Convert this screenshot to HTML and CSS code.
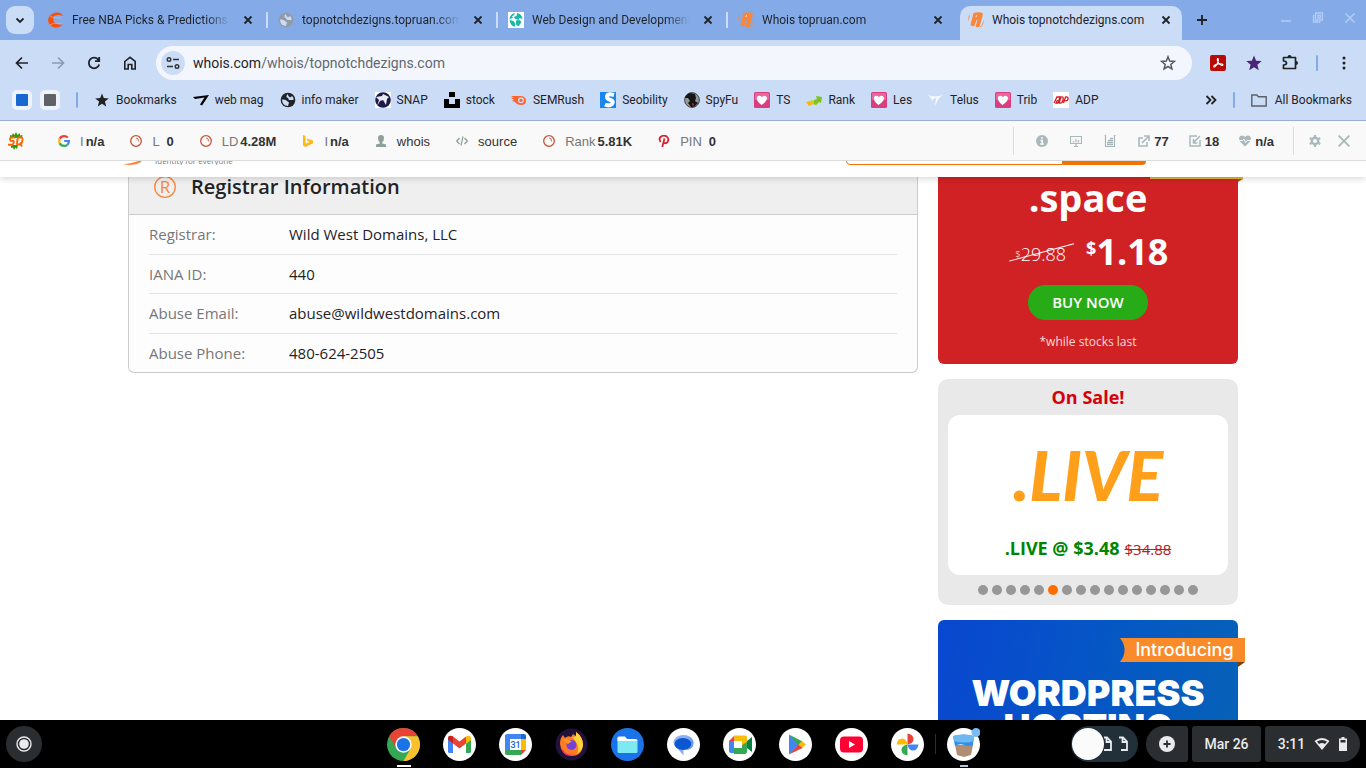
FILE: index.html
```html
<!DOCTYPE html>
<html lang="en">
<head>
	<meta charset="utf-8">
	<title>Whois topnotchdezigns.com</title>
	<link rel="stylesheet" href="styles.css">
</head>
<body>
	<!-- shared icons -->
	<svg class="defs" width="0" height="0">
		<symbol id="close" viewBox="0 0 16 16"><path d="M4.500 4.500l7 7M11.500 4.500l-7 7" fill="none" stroke="currentColor" stroke-width="1.800"/></symbol>
		<symbol id="whois" viewBox="0 0 16 16"><path d="M5.500 1Q10 -.5 14.500 1Q15.200 3 14 6L11.500 14.500Q9 16 7.500 14.500L9.500 8L8.500 8L6.500 13.500Q4.500 15 2.500 13Z" fill="#f8873a"/><path d="M8 5l.700-2" stroke="#fbe0ce"/><path d="M16 8Q15.500 14 11 15.800L13.800 13zM.6 4.500L.3 10 2.200 2.500z" fill="#f8873a"/></symbol>
		<symbol id="globe" viewBox="0 0 16 16"><circle cx="8" cy="8" r="7.300" fill="currentColor"/><path d="M2 7.500Q6 7 7 9L9 10.500L8 14Q2 13.500 2 7.500zM7.500 2Q5 5 8 6L9 8H13.500Q14 5.500 12 4L10 5.500 8.500 4z" fill="#cbdcf6"/></symbol>
		<symbol id="heart" viewBox="0 0 16 16"><rect width="16" height="16" rx="1.500" fill="#d93f80"/><rect x="1" y="1" width="14" height="7" rx="1" fill="#e9679b"/><path d="M7.500 13Q2 9 3 5Q5 2.500 8 5Q11 2.500 13 5.500Q13.500 9 7.500 13Z" fill="#fff"/></symbol>
		<symbol id="ring" viewBox="0 0 12 12"><circle cx="6" cy="6" r="5.300" fill="none" stroke="#c55337" stroke-width="1.300"/><path d="M6 3q3 0 2.500 3.500" fill="none" stroke="#c55337" stroke-width=".8"/></symbol>
	</svg>

	<header class="browser">
		<div class="tabstrip">
			<button class="tab-search" aria-label="Search tabs"><svg viewBox="0 0 16 16" width="16" height="16"><path d="M4.500 6.500L8 10l3.500-3.500" fill="none" stroke="#222" stroke-width="1.800"/></svg></button>
			<nav class="tabs">
				<div class="tab">
					<svg viewBox="0 0 16 16" width="16" height="16"><path d="M1 5Q4 0 10 .5Q14 1 15 4Q10 2 6 4Q4 8 7 11Q11 14 15 12Q11 17 5 15Q-2 11 1 5Z" fill="#f84f0c"/><path d="M2 4q4 3 12 1M2 13q4-3 12-1" fill="none" stroke="#ffad7e" stroke-width=".7"/></svg>
					<a href="#">Free NBA Picks &amp; Predictions</a>
					<button aria-label="Close tab"><svg width="16" height="16"><use href="#close"/></svg></button>
				</div>
				<div class="tab">
					<svg class="dim" width="16" height="16"><use href="#globe"/></svg>
					<a href="#">topnotchdezigns.topruan.com</a>
					<button aria-label="Close tab"><svg width="16" height="16"><use href="#close"/></svg></button>
				</div>
				<div class="tab">
					<svg viewBox="0 0 16 16" width="16" height="16"><path d="M0 0h16v16H0z" fill="#fff"/><path d="M1.500 7Q2 2 7 1L6 3L4 4.500L5 6zM9 1q5 1 5.500 6l-3-1-1 2-3-1-2-2 3-1zM1.500 8l4 1 2 3-1 3Q2 13 1.500 8zM8 8.500l3.500-.500 2 2-3 4.500-2.500-2z" fill="#19b8aa"/></svg>
					<a href="#">Web Design and Development</a>
					<button aria-label="Close tab"><svg width="16" height="16"><use href="#close"/></svg></button>
				</div>
				<div class="tab">
					<svg width="16" height="16"><use href="#whois"/></svg>
					<a href="#">Whois topruan.com</a>
					<button aria-label="Close tab"><svg width="16" height="16"><use href="#close"/></svg></button>
				</div>
				<div class="tab active">
					<svg width="16" height="16"><use href="#whois"/></svg>
					<a href="#">Whois topnotchdezigns.com</a>
					<button aria-label="Close tab"><svg width="16" height="16"><use href="#close"/></svg></button>
				</div>
			</nav>
			<button class="new-tab" aria-label="New tab"><svg viewBox="0 0 16 16" width="16" height="16"><path d="M8 3v10M3 8h10" stroke="#222" stroke-width="1.800"/></svg></button>
			<div class="window-buttons">
				<button aria-label="Minimize"><svg viewBox="0 0 16 16" width="16" height="16"><path d="M3 9h10" stroke="currentColor" stroke-width="1.500"/></svg></button>
				<button aria-label="Restore"><svg viewBox="0 0 16 16" width="16" height="16"><path d="M5.500 1h7v7h-7zM3.500 3v7h7M8 3.500h2.500V6H8z" fill="none" stroke="currentColor" stroke-width="1.300"/></svg></button>
				<button aria-label="Close window"><svg viewBox="0 0 16 16" width="16" height="16"><path d="M3.500 1.500l9 9M12.500 1.500l-9 9" stroke="currentColor" stroke-width="1.500"/></svg></button>
			</div>
		</div>

		<div class="toolbar">
			<div class="nav-buttons">
				<button aria-label="Back"><svg viewBox="0 0 16 16" width="16" height="16"><path d="M14 8H3M8 2.500L2.500 8L8 13.500" fill="none" stroke="currentColor" stroke-width="1.700"/></svg></button>
				<button aria-label="Forward" disabled><svg viewBox="0 0 16 16" width="16" height="16"><path d="M2 8h11M8 2.500L13.500 8L8 13.500" fill="none" stroke="currentColor" stroke-width="1.700"/></svg></button>
				<button aria-label="Reload"><svg viewBox="0 0 16 16" width="16" height="16"><path d="M12.500 5A5.300 5.300 0 1 0 13.200 9.500M13.200 2v4.200H9" fill="none" stroke="currentColor" stroke-width="1.800"/></svg></button>
				<button aria-label="Home"><svg viewBox="0 0 16 16" width="16" height="16"><path d="M2.800 6.500L8 2.300L13.200 6.500V14H9.800V9.500H6.200V14H2.800Z" fill="none" stroke="currentColor" stroke-width="1.600"/></svg></button>
			</div>
			<div class="omnibox">
				<button class="site-info" aria-label="Site information"><svg viewBox="0 0 16 16" width="16" height="16"><path d="M8 4.500h6M2 11.500h6" stroke="#333" stroke-width="1.600"/><circle cx="4" cy="4.500" r="1.800" fill="none" stroke="#333" stroke-width="1.400"/><circle cx="12" cy="11.500" r="1.800" fill="none" stroke="#333" stroke-width="1.400"/></svg></button>
				<a class="url" href="#">whois.com<span>/whois/topnotchdezigns.com</span></a>
				<button aria-label="Bookmark this tab"><svg viewBox="0 0 16 16" width="16" height="16"><path d="M8 1.800l1.700 4.300 4.600.3-3.500 3 1.100 4.500L8 11.500l-3.900 2.400 1.100-4.500-3.500-3 4.600-.3z" fill="none" stroke="#555b63" stroke-width="1.500"/></svg></button>
			</div>
			<div class="extensions">
				<button aria-label="Acrobat"><svg viewBox="0 0 16 16" width="16" height="16"><rect width="16" height="16" rx="2" fill="#b90b06"/><path d="M7.500 3.500Q9 3.500 8 7Q5.500 12.500 4 12Q2.800 11 6 9.500Q12 8 13 9.800Q12.500 11.500 9.500 9Q6.500 5.500 7.500 3.500Z" fill="none" stroke="#fff" stroke-width="1.100"/></svg></button>
				<button aria-label="Star extension"><svg viewBox="0 0 16 16" width="16" height="16"><path d="M8 .5l2.100 5.200 5.600.3-4.300 3.700 1.400 5.500L8 12.200l-4.800 3 1.400-5.500L.3 6l5.600-.3z" fill="#4c2474"/></svg></button>
				<button aria-label="Extensions"><svg viewBox="0 0 16 16" width="16" height="16"><path d="M1.500 2.500h12v11h-12v-3.500q3-.2 3-2t-3-2z" fill="none" stroke="#222" stroke-width="1.700" stroke-linejoin="round"/><path d="M5.500 2q0-2 2-2t2 2zM14 6q2 0 2 2t-2 2z" fill="#222"/></svg></button>
				<i class="divider"></i>
				<button aria-label="Menu"><svg viewBox="0 0 16 16" width="16" height="16"><g fill="#222"><circle cx="8" cy="3" r="1.500"/><circle cx="8" cy="8" r="1.500"/><circle cx="8" cy="13" r="1.500"/></g></svg></button>
			</div>
		</div>

		<nav class="bookmarks">
			<button class="swatch blue" aria-label="Blue tab group"></button>
			<button class="swatch gray" aria-label="Gray tab group"></button>
			<i class="divider"></i>
			<a href="#"><svg viewBox="0 0 16 16" width="16" height="16"><path d="M8 1.500l1.800 4.600 5 .3-3.900 3.200 1.300 4.900L8 11.800l-4.200 2.700 1.300-4.900L1.200 6.400l5-.3z" fill="#222"/></svg>Bookmarks</a>
			<a href="#"><svg viewBox="0 0 16 16" width="16" height="16"><path d="M0 5L16 3L9 13.500L7 12.500L11.500 5.500L2 7z"/></svg>web mag</a>
			<a href="#"><svg width="16" height="16"><use href="#globe"/></svg>info maker</a>
			<a href="#"><svg viewBox="0 0 16 16" width="16" height="16"><path d="M0 0h16v16H0z" fill="#fff"/><circle cx="8" cy="8" r="7.800" fill="#1b1b4b"/><path d="M1 5l6-1 1-2 6 3-2 2-1 6-3-5-3 1-3 5 2-6z" fill="#e8e8f2"/></svg>SNAP</a>
			<a href="#"><svg viewBox="0 0 16 16" width="16" height="16"><path d="M5 0h6v5H5zM0 7h5v5h6V7h5v9H0z"/></svg>stock</a>
			<a href="#"><svg viewBox="0 0 16 16" width="16" height="16"><path d="M0 4h9q6 0 6 5 0 4-5 4-4 0-6-3l-3-1 2-1-3-2h3z" fill="#ff642d"/><circle cx="10" cy="8.300" r="3" fill="#cbdcf6"/><circle cx="10" cy="8.300" r="1.600" fill="#ff642d"/></svg>SEMRush</a>
			<a href="#"><svg viewBox="0 0 16 16" width="16" height="16"><path d="M0 0h16v16H0z" fill="#1986ee"/><path d="M14 3Q7 1 7 5Q7 7 10.500 8Q14 9 12 12Q9 14.500 5 12.500" fill="none" stroke="#fff" stroke-width="4"/></svg>Seobility</a>
			<a href="#"><svg viewBox="0 0 16 16" width="16" height="16"><circle cx="8" cy="8" r="7.400" fill="#94979c" stroke="#444"/><path d="M1 6q1-4 5-5l5 1 1 4-1 3 3 2-4 4H7L4 11l2-2-2-3z" fill="#161616"/><path d="M8 11l2 1-1 3z" fill="#d22"/></svg>SpyFu</a>
			<a href="#"><svg width="16" height="16"><use href="#heart"/></svg>TS</a>
			<a href="#"><svg viewBox="0 0 16 16" width="16" height="16"><path d="M0 10l4-1 3 3-4 2z" fill="#f5b90a"/><path d="M4 9l3-1 4 4-3 1z" fill="#c2d22a"/><path d="M8 12V8l3-1-1-3 6 1-1 6-2-1-3 3z" fill="#7fc31c"/></svg>Rank</a>
			<a href="#"><svg width="16" height="16"><use href="#heart"/></svg>Les</a>
			<a href="#"><svg viewBox="0 0 16 16" width="16" height="16"><path d="M0 3q7 3 15 0Q9 6 7.500 14Q7 8 9 5.500Q5 6 4 9Q4 6 0 3z" fill="#fff"/></svg>Telus</a>
			<a href="#"><svg width="16" height="16"><use href="#heart"/></svg>Trib</a>
			<a href="#"><svg viewBox="0 0 16 16" width="16" height="16"><path d="M0 0h16v16H0z" fill="#fff"/><path d="M1 11l3-6h3l-2 6H3l1.500-3M6 11l2-6q3-1 2 3t-4 3M10.500 11l2-6q3-.5 2.500 2t-3.500 1.500" fill="none" stroke="#d41920" stroke-width="1.300"/></svg>ADP</a>
			<div class="bookmarks-end">
				<button aria-label="More bookmarks"><svg viewBox="0 0 16 16" width="16" height="16"><path d="M3.500 4L7.500 8l-4 4M8.500 4l4 4-4 4" fill="none" stroke="#222" stroke-width="1.800"/></svg></button>
				<i class="divider"></i>
				<a href="#"><svg viewBox="0 0 16 16" width="16" height="16"><path d="M.8 3h5l1.600 1.800h7.800V14H.8z" fill="none" stroke="#5b6067" stroke-width="1.400"/></svg>All Bookmarks</a>
			</div>
		</nav>
	</header>

	<!-- SEO extension bar -->
	<div class="seobar">
		<svg viewBox="0 0 16 18" width="16" height="18"><path d="M2 6V3l2 .5L5 1l1.500 2L8 0l1.500 3L12 1v2.500l2.500-.5L14 6zM3 13h7l-1 4-1.500-1.500L6 18l-1-2.500L3 16z" fill="#2f9a0c"/><path d="M7.500 5.500H3.500Q2 5.500 2 7.200T3.500 9H5Q6.200 9 5.700 10.800T4 12.700H0M10.500 5.500h2.500Q15 5.500 14.500 8l-.6 2.500q-.5 2-2.200 2H10Q8.500 12.500 9 10.500L9.500 7.500Q9.700 5.500 10.500 5.500zM12 10.500l2 4" fill="none" stroke="#ff6a00" stroke-width="1.900"/></svg>
		<div class="seo-items">
			<a href="#"><svg viewBox="0 0 12 12" width="12" height="12"><g fill="none" stroke-width="2.200"><path d="M9.800 2.600Q8.500 1.100 6.200 1.100Q3 1.100 1.700 3.700" stroke="#ea4335"/><path d="M1.700 3.700Q.7 6 1.700 8.200" stroke="#fbbc05"/><path d="M1.700 8.200Q3 10.900 6.200 10.900Q8 10.900 9.300 9.800" stroke="#34a853"/><path d="M9.300 9.800Q10.900 8.300 10.900 6H6.200" stroke="#4285f4"/></g></svg><span>I</span><b>n/a</b></a>
			<a href="#"><svg width="12" height="12"><use href="#ring"/></svg><span>L</span><b>0</b></a>
			<a href="#"><svg width="12" height="12"><use href="#ring"/></svg><span>LD</span><b>4.28M</b></a>
			<a href="#"><svg viewBox="0 0 12 12" width="12" height="12"><path d="M1 0l2.500 1v7.500L7.500 7 5.500 6 4.500 3.500 11 5.500v2.800L3.500 12 1 10.500z" fill="#fbb91a"/></svg><span>I</span><b>n/a</b></a>
			<a href="#"><svg viewBox="0 0 12 12" width="12" height="12"><path d="M6 0Q9 0 9 3T7.300 7v1.500L11 9.500V12H1V9.500l3.700-1V7Q3 6 3 3T6 0z" fill="#8f9f99"/></svg>whois</a>
			<a href="#"><svg viewBox="0 0 12 12" width="12" height="12"><path d="M3.500 3L.7 6l2.800 3M8.500 3l2.800 3-2.800 3M7 1.500l-2 9" fill="none" stroke="#8f9f99" stroke-width="1.200"/></svg>source</a>
			<a href="#"><svg width="12" height="12"><use href="#ring"/></svg><span>Rank</span><b>5.81K</b></a>
			<a href="#"><svg viewBox="0 0 12 12" width="12" height="12"><path d="M2.700 7Q.5 4 2.500 2Q5.500-.4 8.800 1.600Q11.500 4 9.500 7Q8 9 5.800 7.700M6.500 3.500L4.300 12" fill="none" stroke="#d8232e" stroke-width="1.800"/></svg><span>PIN</span><b>0</b></a>
		</div>
		<div class="seo-tools">
			<button aria-label="Info"><svg viewBox="0 0 12 12" width="12" height="12"><circle cx="6" cy="6" r="6" fill="currentColor"/><path d="M6 2v1.800M4.500 5.400H6.200V9M4.300 9h3.500" stroke="#fff" stroke-width="1.500" fill="none"/></svg></button>
			<button aria-label="Overview"><svg viewBox="0 0 12 12" width="12" height="12"><path d="M.5 1.500h11v7H.5zM4 11.500h4M6 9v2M3.500 7.500V6M6 7.500V4M8.500 7.500V5" stroke="currentColor" stroke-width="1.200" fill="none"/></svg></button>
			<button aria-label="Density"><svg viewBox="0 0 12 12" width="12" height="12"><path d="M.5.5h1v11h9V.5h1" stroke="currentColor" stroke-width="1.200" fill="none"/><path d="M3 9.500h6M3 7.500h6M4 5.500h5M6 3.500h3" stroke="currentColor" stroke-width="1.400"/></svg></button>
			<a href="#"><svg viewBox="0 0 12 12" width="12" height="12"><path d="M5 3H1v8h8V7M4 8l6-6M6 1h5v5" fill="none" stroke="currentColor" stroke-width="1.600"/></svg><b>77</b></a>
			<a href="#"><svg viewBox="0 0 12 12" width="12" height="12"><path d="M8 1H1v10h10V5M11 1L5 7M4.500 4v4h4" fill="none" stroke="currentColor" stroke-width="1.500"/></svg><b>18</b></a>
			<a href="#"><svg viewBox="0 0 12 12" width="12" height="12"><path d="M6 11.500L.5 6Q-1 .5 3.500.5 5 .5 6 2 7 .5 8.500.5 13 .5 11.500 6z" fill="currentColor"/><path d="M0 5.500h3.500L5 4l1.500 3.500L8 5.500h4" fill="none" stroke="#f9f9f9"/></svg><b>n/a</b></a>
		</div>
		<div class="seo-end">
			<button aria-label="Settings"><svg viewBox="0 0 12 12" width="12" height="12"><circle cx="6" cy="6" r="3.200" fill="none" stroke="currentColor" stroke-width="2.400"/><path d="M6 0v2M6 10v2M.8 3l1.700 1M9.500 8l1.700 1M.8 9l1.700-1M9.500 4l1.700-1" stroke="currentColor" stroke-width="2.200"/></svg></button>
			<button aria-label="Close bar"><svg viewBox="0 0 12 12" width="12" height="12"><path d="M.6.6l10.800 10.800M11.400.6L.6 11.400" stroke="currentColor" stroke-width="1.900"/></svg></button>
		</div>
	</div>

	<div class="page">
		<!-- sticky site header, mostly under the bar -->
		<div class="site-header">
			<div class="site-header-inner">
				<svg viewBox="0 0 22 10" width="22" height="10"><path d="M0 9.500Q12 8 20 4L18 7Q12 11 0 9.500Z" fill="#f8873a"/></svg>
				<span class="tagline">Identity for everyone</span>
				<form class="search">
					<input type="text" aria-label="Search domains">
					<button type="button" aria-label="Search"></button>
				</form>
			</div>
		</div>

		<div class="content">
			<main class="registrar">
				<h2><svg viewBox="0 0 22 22" width="22" height="22"><circle cx="11" cy="11" r="10.300" fill="none" stroke="#f8873a" stroke-width="1.300"/><text x="11" y="17" text-anchor="middle">R</text></svg>Registrar Information</h2>
				<table>
					<tr><th>Registrar:</th><td>Wild West Domains, LLC</td></tr>
					<tr><th>IANA ID:</th><td>440</td></tr>
					<tr><th>Abuse Email:</th><td>abuse@wildwestdomains.com</td></tr>
					<tr><th>Abuse Phone:</th><td>480-624-2505</td></tr>
				</table>
			</main>

			<aside>
				<section class="promo">
					<i class="promo-ribbon"></i>
					<h3>.space</h3>
					<p class="price"><s><small>$</small>29.88</s><b><sup>$</sup>1.18</b></p>
					<button>BUY NOW</button>
					<p class="note">*while stocks last</p>
				</section>

				<section class="sale">
					<h3>On Sale!</h3>
					<div class="slide">
						<span class="live">.LIVE</span>
						<p><b>.LIVE @ $3.48</b><del>$34.88</del></p>
					</div>
					<div class="dots">
						<button aria-label="Slide 1"></button>
						<button aria-label="Slide 2"></button>
						<button aria-label="Slide 3"></button>
						<button aria-label="Slide 4"></button>
						<button aria-label="Slide 5"></button>
						<button aria-label="Slide 6" class="current"></button>
						<button aria-label="Slide 7"></button>
						<button aria-label="Slide 8"></button>
						<button aria-label="Slide 9"></button>
						<button aria-label="Slide 10"></button>
						<button aria-label="Slide 11"></button>
						<button aria-label="Slide 12"></button>
						<button aria-label="Slide 13"></button>
						<button aria-label="Slide 14"></button>
						<button aria-label="Slide 15"></button>
						<button aria-label="Slide 16"></button>
					</div>
				</section>

				<section class="wordpress">
					<span class="ribbon">Introducing</span>
					<h3>WORDPRESS HOSTING</h3>
				</section>
			</aside>
		</div>
	</div>

	<footer class="shelf">
		<button class="launcher" aria-label="Launcher"><svg viewBox="0 0 16 16" width="16" height="16"><circle cx="8" cy="8" r="7" fill="none" stroke="#e8eaed" stroke-width="1.400"/><circle cx="8" cy="8" r="4.800" fill="#e8eaed"/></svg></button>
		<nav class="apps">
			<button class="running" aria-label="Chrome"><svg viewBox="0 0 33 33" width="33" height="33"><circle cx="16.500" cy="16.500" r="16.500" fill="#34a853"/><path d="M2.200 8.300A16.500 16.500 0 0 1 30.800 8.300H16.500L9.400 20.600z" fill="#ea4335"/><path d="M30.800 8.300A16.500 16.500 0 0 1 16.500 33L23.600 20.600 16.500 8.300z" fill="#fbc02d"/><circle cx="16.500" cy="16.500" r="8.200" fill="#fff"/><circle cx="16.500" cy="16.500" r="6.600" fill="#1a73e8"/></svg></button>
			<button aria-label="Gmail"><svg viewBox="0 0 33 33" width="33" height="33"><circle cx="16.500" cy="16.500" r="16.500" fill="#fff"/><path d="M5 10h5v15H6.500Q5 25 5 23.500z" fill="#4285f4"/><path d="M23 10h5v13.500Q28 25 26.500 25H23z" fill="#34a853"/><path d="M5 11q0-5 5-2.500l6.500 5 6.500-5v7l-6.500 5-6.500-5-5-4z" fill="#ea4335"/><path d="M23 8.500q5-2.500 5 2.500v1l-5 4z" fill="#fbbc04"/><path d="M5 11q0-5 5-2.500v7l-5-4z" fill="#c5221f"/></svg></button>
			<button aria-label="Calendar"><svg viewBox="0 0 33 33" width="33" height="33"><circle cx="16.500" cy="16.500" r="16.500" fill="#fff"/><path d="M6 8q0-2 2-2h14v5H11v11H6z" fill="#4285f4"/><path d="M22 6h3q2 0 2 2v3h-5z" fill="#1967d2"/><path d="M22 11h5v11h-5z" fill="#fbbc04"/><path d="M6 22h16v5H8q-2 0-2-2z" fill="#34a853"/><path d="M22 22h5l-5 5z" fill="#ea4335"/><text class="day" x="16.500" y="20" text-anchor="middle">31</text></svg></button>
			<button aria-label="Firefox"><svg viewBox="0 0 33 33" width="33" height="33"><circle cx="16.500" cy="16.500" r="16" fill="#20123a"/><path d="M5 16Q5 10 8 7L10 10Q13 7 16 9L18 6L21 8L21 4Q28 9 28 17Q27 28 16.500 28Q6 27 5 16Z" fill="#ff7a22"/><path d="M21 4Q28 9 28 17Q27 23 22 26Q25 20 21 14L17 9Q20 9 21 8z" fill="#ffd43b"/><path d="M7 20Q11 29 21 26Q16 29 11 27Q7 24 7 20z" fill="#f5325b"/><circle cx="16.500" cy="17" r="5" fill="#7542d5"/><path d="M8 11q4-1 5 1l4 1-4 3q-3-1-5-5z" fill="#ff9a1f"/></svg></button>
			<button aria-label="Files"><svg viewBox="0 0 33 33" width="33" height="33"><circle cx="16.500" cy="16.500" r="16.500" fill="#1a73e8"/><path d="M7 9h7l2 2.500h9q1.500 0 1.500 1.500v11q0 1-1.500 1H8q-1.500 0-1.500-1.500V10z" fill="#7de9f0"/><path d="M6.500 10q0-1.500 1.500-1.500h6l2 2.500h8.500q2 0 2 2h-20z" fill="#fff"/></svg></button>
			<button aria-label="Messages"><svg viewBox="0 0 33 33" width="33" height="33"><circle cx="16.500" cy="16.500" r="16.500" fill="#fff"/><ellipse cx="16.500" cy="14.500" rx="10" ry="7.500" fill="#8bb0f7"/><path d="M10 20l6.500 1v6.500z" fill="#8bb0f7"/><ellipse cx="16" cy="16" rx="8.500" ry="6" fill="#0b57d0"/><path d="M26.500 15q0 7-8 7 6-2 6-7t-5-6.500q7 1 7 6.500z" fill="#6a98ee"/></svg></button>
			<button aria-label="Meet"><svg viewBox="0 0 33 33" width="33" height="33"><circle cx="16.500" cy="16.500" r="16.500" fill="#fff"/><path d="M6 13h5v12H8q-2 0-2-2z" fill="#4285f4"/><path d="M6 13l5.500-5.500V13z" fill="#ea4335"/><path d="M11.500 7.500H22q2 0 2 2V16l-5 2v-5h-7.500z" fill="#fbbc04"/><path d="M11 20h8v-3l5-3v9q0 3-2 3H11z" fill="#34a853"/><path d="M24 13l5-4v15l-5-4z" fill="#0b8043"/></svg></button>
			<button aria-label="Play Store"><svg viewBox="0 0 33 33" width="33" height="33"><circle cx="16.500" cy="16.500" r="16.500" fill="#fff"/><path d="M10 6.500v20l10-10z" fill="#4285f4"/><path d="M10 6.500l13.500 7-4 4z" fill="#34a853"/><path d="M23 13l4 3.500-4 3.500-3.500-3.500z" fill="#fbbc04"/><path d="M10 26.500l9.500-10 4 3.500z" fill="#ea4335"/></svg></button>
			<button aria-label="YouTube"><svg viewBox="0 0 33 33" width="33" height="33"><circle cx="16.500" cy="16.500" r="16.500" fill="#fff"/><rect x="5" y="8.500" width="23" height="16" rx="4" fill="#ff0033"/><path d="M14 13v7l6-3.500z" fill="#fff"/></svg></button>
			<button aria-label="Photos"><svg viewBox="0 0 33 33" width="33" height="33"><circle cx="16.500" cy="16.500" r="16.500" fill="#fff"/><path d="M16.500 5.500q6 1 6 5.500t-6 5.500z" fill="#ea4335"/><path d="M27.500 16.500q-1 6-5.500 6t-5.500-6z" fill="#4285f4"/><path d="M16.500 27.500q-6-1-6-5.500t6-5.500z" fill="#34a853"/><path d="M5.500 16.500q1-6 5.500-6t5.500 6z" fill="#fbbc04"/></svg></button>
			<i></i>
			<button class="running dimmed" aria-label="Cup"><svg viewBox="0 0 33 33" width="33" height="33"><circle cx="16.500" cy="16.500" r="16.500" fill="#fff"/><path d="M8 17h18l-2 10-7 2-7-2z" fill="#b18e72"/><path d="M6 8q11-3 21 0l-1 9q-5 2-9 0t-9 1z" fill="#3291e5"/><path d="M6 8q11-3 21 0v5q-10 3-20 0z" fill="#6fb9f3"/><circle cx="29" cy="4.500" r="4.500" fill="#78bbf5"/></svg></button>
		</nav>
		<div class="status">
			<button class="tote" aria-label="Recent files">
				<i></i>
				<svg viewBox="0 0 8 16" width="8" height="16"><path d="M0 1.500h3l4 4V14H0M2.500 2v4H7" fill="none" stroke="#e8eaed" stroke-width="1.800"/></svg>
				<svg viewBox="0 0 12 16" width="12" height="16"><path d="M1 1.500h4l4 4V14H3M4.500 2v4H9" fill="none" stroke="#e8eaed" stroke-width="1.800"/></svg>
			</button>
			<button class="add" aria-label="Add"><svg viewBox="0 0 16 16" width="16" height="16"><circle cx="8" cy="8" r="8" fill="#e8eaed"/><path d="M8 4.500v7M4.500 8h7" stroke="#2b2e31" stroke-width="1.800"/></svg></button>
			<button class="date">Mar 26</button>
			<button class="time">3:11
				<svg viewBox="0 0 16 16" width="16" height="16"><path d="M.5 5q7.500-6 15 0L8 14z" fill="#e8eaed"/><path d="M3 5.500q5-3 10 0l-2 2.500q-3-2-6 0z" fill="#2b2e31"/></svg>
				<svg viewBox="0 0 8 16" width="8" height="16"><path d="M2.500 1h3v1.500H8V15H0V2.500h2.500z" fill="#e8eaed"/><path d="M1.500 4h5v2.500h-5z" fill="#2b2e31"/></svg>
			</button>
		</div>
	</footer>
</body>
</html>
```

FILE: styles.css
```css
* {
	box-sizing: border-box;
}
body {
	margin: 0;
	height: 100vh;
	display: flex;
	flex-direction: column;
	overflow: hidden;
	background-color: #fff;
	font-family: Roboto, sans-serif;
	font-size: 12px;
	color: #1f2328;
}
a {
	color: inherit;
	text-decoration: none;
}
button {
	font: inherit;
	color: inherit;
	background: none;
	border: none;
	padding: 0;
}
h2, h3, p {
	margin: 0;
}
svg {
	display: block;
	flex: none;
}
.defs {
	position: absolute;
}

/* browser frame */
.browser {
	flex: none;
	background-color: #cbdcf6;
	border-bottom: 1px solid #9dacd8;
}
.tabstrip {
	display: flex;
	align-items: center;
	height: 40px;
	padding: 0 8px 0 6px;
	background-color: #84abe8;
}
.tab-search {
	width: 28px;
	height: 28px;
	margin-right: 6px;
	display: flex;
	align-items: center;
	justify-content: center;
	flex: none;
	border-radius: 9px;
	background-color: #cbdcf6;
}
.tabs {
	display: flex;
	flex: 0 1 1142px;
	min-width: 0;
	align-self: stretch;
	padding-top: 6px;
}
.tab {
	display: flex;
	align-items: center;
	flex: 0 1 230px;
	min-width: 0;
	gap: 8px;
	padding: 0 14px 6px 8px;
	position: relative;
}
.tab a {
	flex: 1;
	overflow: hidden;
	white-space: nowrap;
	-webkit-mask-image: linear-gradient(to right, #000 85%, transparent);
	mask-image: linear-gradient(to right, #000 85%, transparent);
}
.tab button {
	margin-left: 2px;
}
.tab::after {
	content: "";
	position: absolute;
	right: 2px;
	top: 6px;
	width: 2px;
	height: 16px;
	background-color: #cbdcf6;
}
.tab:nth-last-child(-n+2)::after {
	display: none;
}
.tab.active {
	flex-basis: 222px;
	border-radius: 10px 10px 0 0;
	background-color: #cbdcf6;
	padding-right: 8px;
}
.tab.active a {
	-webkit-mask-image: none;
	mask-image: none;
}
.dim {
	color: #939aa5;
}
.new-tab {
	margin-left: 12px;
}
.window-buttons {
	display: flex;
	gap: 16px;
	margin-left: auto;
	color: #b4cdf7;
}
.toolbar {
	display: flex;
	align-items: center;
	height: 40px;
	padding: 6px 14px 0;
	gap: 18px;
}
.nav-buttons, .extensions {
	display: flex;
	align-items: center;
	gap: 20px;
}
.nav-buttons button:disabled {
	color: #8b9bb5;
}
.extensions .divider {
	margin: 0 -2px;
}
.omnibox {
	flex: 1;
	height: 34px;
	display: flex;
	align-items: center;
	padding: 0 16px 0 5px;
	border-radius: 17px;
	background-color: #f3f7fd;
}
.site-info {
	width: 24px;
	height: 24px;
	display: flex;
	align-items: center;
	justify-content: center;
	border-radius: 50%;
	background-color: #cbdcf6;
}
.url {
	flex: 1;
	margin-left: 8px;
	font-size: 14px;
}
.url span {
	color: #63686f;
}
.divider {
	width: 2px;
	height: 16px;
	border-radius: 1px;
	background-color: #84abe8;
}
.bookmarks {
	display: flex;
	align-items: center;
	gap: 16px;
	height: 40px;
	padding: 0 14px 0 12px;
}
.bookmarks a {
	display: flex;
	align-items: center;
	gap: 6px;
	white-space: nowrap;
}
.swatch {
	width: 20px;
	height: 20px;
	margin-right: -8px;
	border: 4px solid #eef3fb;
	border-radius: 5px;
}
.swatch + .divider {
	margin-left: 8px;
}
.blue {
	background-color: #1967d2;
}
.gray {
	background-color: #5f6368;
}
.bookmarks-end {
	display: flex;
	align-items: center;
	gap: 14px;
	margin-left: auto;
}
.bookmarks-end a {
	gap: 8px;
	margin-left: 2px;
}

/* seo bar */
.seobar {
	flex: none;
	display: flex;
	align-items: center;
	height: 40px;
	padding: 1px 0 0 8px;
	border-bottom: 1px solid #dcdcdc;
	background-color: #f9f9f9;
	font-family: "Liberation Sans", Arial, sans-serif;
	font-size: 13px;
	color: #333;
}
.seo-items {
	display: flex;
	gap: 26px;
	margin-left: 34px;
}
.seo-items a {
	display: flex;
	align-items: center;
}
.seo-items svg {
	margin-right: 10px;
}
.seo-items span {
	color: #777;
	margin-right: 2px;
}
.seo-items b {
	min-width: 12px;
	text-align: right;
}
.seo-tools, .seo-end {
	display: flex;
	align-items: center;
	height: 28px;
	border-left: 1px solid #dedede;
	color: #a9b8ba;
}
.seo-tools {
	gap: 22px;
	margin-left: auto;
	padding: 0 21px 0 22px;
}
.seo-tools a {
	display: flex;
	align-items: center;
	gap: 4px;
	margin-right: -2px;
}
.seo-tools b {
	color: #333;
}
.seo-end {
	gap: 17px;
	padding: 0 16px 0 15px;
}

/* whois page */
.page {
	flex: 1;
	min-height: 0;
	overflow: hidden;
	font-family: "Open Sans", sans-serif;
}
.site-header {
	position: relative;
	z-index: 1;
	height: 16px;
	background-color: #fff;
	box-shadow: 0 2px 6px rgba(0, 0, 0, .15);
}
.site-header-inner {
	display: flex;
	align-items: flex-end;
	max-width: 1120px;
	height: 4px;
	margin: 0 auto;
	overflow: hidden;
}
.tagline {
	margin-left: 10px;
	font-size: 8px;
	line-height: 8px;
	color: #777;
}
.search {
	display: flex;
	width: 300px;
	height: 34px;
	margin-left: auto;
	margin-right: 97px;
}
.search input {
	flex: 1;
	min-width: 0;
	border: 1px solid #f57200;
	border-radius: 4px 0 0 4px;
}
.search button {
	width: 83px;
	border-radius: 0 4px 4px 0;
	background-color: #f57200;
}
.content {
	display: flex;
	align-items: flex-start;
	gap: 20px;
	max-width: 1110px;
	margin: 0 auto;
}
.registrar {
	flex: 1;
	border: 1px solid #ccc;
	border-top: none;
	border-radius: 0 0 6px 6px;
	background-color: #fdfdfd;
}
.registrar h2 {
	display: flex;
	align-items: center;
	gap: 15px;
	height: 38px;
	padding: 0 25px 18px;
	border-bottom: 1px solid #ccc;
	background-color: #efefef;
	font-size: 20px;
	font-weight: 600;
}
.registrar h2 text {
	font-size: 17px;
	font-weight: 400;
	fill: #f8873a;
}
.registrar table {
	width: calc(100% - 40px);
	margin: 0 20px;
	border-collapse: collapse;
	font-size: 15px;
	line-height: 1.5;
}
.registrar th, .registrar td {
	padding: 8px 0;
	border-bottom: 1px solid #e4e4e4;
	text-align: left;
	font-weight: 400;
}
.registrar th {
	width: 140px;
	color: #777;
}
.registrar tr:last-child > * {
	border-bottom: none;
}
aside {
	width: 300px;
	flex: none;
}
aside h3, .promo, .slide {
	text-align: center;
}
.promo {
	position: relative;
	height: 187px;
	border-radius: 0 0 6px 6px;
	background-color: #d02224;
	color: #fff;
}
.promo-ribbon {
	position: absolute;
	top: 0;
	right: -5px;
	width: 93px;
	height: 2px;
	background-color: #e5b52e;
}
.promo-ribbon::after {
	content: "";
	position: absolute;
	right: 0;
	top: 2px;
	border-top: 3px solid #c04a00;
	border-right: 5px solid transparent;
}
.promo h3 {
	font-size: 38px;
	line-height: 40px;
}
.price {
	display: flex;
	align-items: center;
	justify-content: center;
	gap: 20px;
	height: 68px;
	padding: 2px 0 0 8px;
}
.price s {
	position: relative;
	font-size: 18px;
	font-weight: 300;
	text-decoration: none;
	padding-top: 4px;
}
.price s::after {
	content: "";
	position: absolute;
	left: -8px;
	right: -8px;
	top: 50%;
	height: 1px;
	background-color: #fff;
	transform: rotate(-15deg);
}
.price small {
	font-size: 9px;
	vertical-align: 3px;
}
.price b {
	font-size: 36px;
	line-height: 40px;
}
.price sup {
	font-size: 18px;
	line-height: 18px;
	vertical-align: 10px;
}
.promo button {
	width: 120px;
	height: 35px;
	padding-bottom: 2px;
	border-radius: 18px;
	background-color: #27ac17;
	font-size: 15px;
	font-weight: 600;
}
.note {
	margin-top: 13px;
	font-size: 12px;
	line-height: 18px;
	color: #fbdcdc;
}
.sale {
	height: 226px;
	margin-top: 15px;
	padding: 0 10px;
	border-radius: 10px;
	background-color: #e9e9e9;
}
.sale h3 {
	font-size: 18px;
	line-height: 36px;
	color: #d6000b;
}
.slide {
	height: 160px;
	padding-top: 20px;
	border-radius: 12px;
	background-color: #fff;
}
.live {
	display: block;
	font-family: Lato, sans-serif;
	font-size: 68px;
	font-weight: 900;
	font-style: italic;
	line-height: 80px;
	color: #ff9f1a;
}
.slide p {
	margin-top: 20px;
	line-height: 26px;
}
.slide b {
	margin-right: 5px;
	font-size: 18px;
	color: #008500;
}
.slide del {
	font-size: 15px;
	color: #b22222;
}
.dots {
	display: flex;
	justify-content: center;
	gap: 4px;
	margin-top: 10px;
}
.dots button {
	width: 10px;
	height: 10px;
	border-radius: 50%;
	background-color: #979797;
}
.dots .current {
	background-color: #ff6d00;
}
.wordpress {
	position: relative;
	height: 240px;
	margin-top: 15px;
	padding: 56px 20px 0;
	border-radius: 6px;
	background: linear-gradient(100deg, #0947d0, #0558c4 55%, #0763b5);
	color: #fff;
	font-family: Inter, sans-serif;
}
.wordpress h3 {
	font-size: 36px;
	font-weight: 900;
	line-height: 34px;
}
.ribbon {
	position: absolute;
	top: 18px;
	right: -7px;
	width: 126px;
	padding-left: 5px;
	background: radial-gradient(circle at -12px 12px, transparent 17px, #f98b2b 18px);
	font-size: 18px;
	font-weight: 500;
	line-height: 24px;
	text-align: center;
}
.ribbon::after {
	content: "";
	position: absolute;
	right: 0;
	top: 24px;
	border-top: 5px solid #73420f;
	border-right: 7px solid transparent;
}

/* shelf */
.shelf {
	flex: none;
	display: grid;
	grid-template-columns: 1fr auto 1fr;
	align-items: center;
	height: 48px;
	padding: 0 6px;
	background-color: #000;
	color: #e8eaed;
	font-size: 14px;
	font-weight: 500;
}
.launcher {
	width: 36px;
	height: 36px;
	display: flex;
	align-items: center;
	justify-content: center;
	border-radius: 50%;
	background-color: #2b2e31;
}
.apps {
	display: flex;
	align-items: center;
	gap: 23px;
}
.apps i {
	width: 1px;
	height: 20px;
	margin: 0 -12px;
	background-color: #2b2e31;
}
.apps button {
	position: relative;
}
.running::after {
	content: "";
	position: absolute;
	left: 10px;
	bottom: -6px;
	width: 14px;
	height: 2px;
	background-color: #fff;
}
.dimmed::after {
	left: 13px;
	width: 8px;
	background-color: #b5c6da;
}
.day {
	font-size: 9px;
	fill: #1967d2;
}
.status {
	display: flex;
	justify-content: flex-end;
	gap: 4px;
}
.status button {
	height: 36px;
	display: flex;
	align-items: center;
	justify-content: center;
	background-color: #2b2e31;
}
.status .tote {
	justify-content: flex-start;
	width: 67px;
	margin-right: 4px;
	border-radius: 18px;
	background-color: #22303a;
}
.tote i {
	width: 32px;
	height: 32px;
	margin-left: 1px;
	border-radius: 50%;
	background-color: #fbfbfb;
}
.tote svg + svg {
	margin-left: 6px;
}
.status .add {
	width: 42px;
	border-radius: 18px 3px 3px 18px;
}
.status .date {
	width: 69px;
	border-radius: 3px;
}
.status .time {
	width: 95px;
	gap: 9px;
	border-radius: 3px 18px 18px 3px;
}
```
